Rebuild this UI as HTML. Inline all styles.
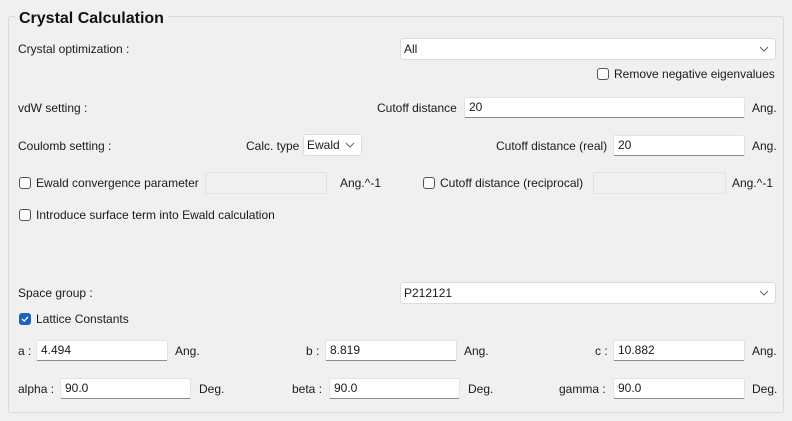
<!DOCTYPE html>
<html><head><meta charset="utf-8"><style>
html,body{margin:0;padding:0;}
body{width:792px;height:421px;background:#f0f0f0;position:relative;overflow:hidden;font-family:"Liberation Sans",sans-serif;font-size:12px;color:#1a1a1a;}
.g{position:absolute;left:8px;top:16px;width:774px;height:395px;border:1px solid #d9d9d9;border-radius:3px;}
.title{position:absolute;left:15px;top:8px;padding:0 4px;background:#f0f0f0;font-size:16px;font-weight:bold;color:#111;line-height:22px;}
.t{position:absolute;height:22px;line-height:22px;white-space:nowrap;}
.i{position:absolute;height:21px;background:#fff;border:1px solid #e3e3e3;border-bottom:1px solid #8a8a8a;box-sizing:border-box;border-radius:2px;line-height:19px;padding-left:4px;}
.d{position:absolute;height:22px;background:#f0f0f0;border:1px solid #e2e2e2;box-sizing:border-box;border-radius:2px;}
.c{position:absolute;height:22px;background:#fff;border:1px solid #dcdcdc;box-sizing:border-box;border-radius:3px;line-height:20px;padding-left:3px;}
.c svg{position:absolute;right:6px;top:7px;}
.cb{position:absolute;width:12px;height:12px;border:1px solid #555;border-radius:3px;background:#fff;box-sizing:border-box;}
.cb.on{background:#1a63c0;border-color:#1a63c0;}
</style></head><body>
<div class="g"></div>
<div class="title">Crystal Calculation</div>

<div class="t" style="left:18px;top:38px">Crystal optimization :</div>
<div class="c" style="left:400px;top:38px;width:376px">All<svg width="10" height="6"><path d="M1 1L5 5L9 1" stroke="#666" fill="none"/></svg></div>
<div class="cb" style="left:597px;top:68px"></div>
<div class="t" style="left:614px;top:63px">Remove negative eigenvalues</div>

<div class="t" style="left:18px;top:97px">vdW setting :</div>
<div class="t" style="left:377px;top:97px">Cutoff distance</div>
<div class="i" style="left:464px;top:97px;width:281px">20</div>
<div class="t" style="left:752px;top:97px">Ang.</div>

<div class="t" style="left:18px;top:135px">Coulomb setting :</div>
<div class="t" style="left:246px;top:135px">Calc. type</div>
<div class="c" style="left:303px;top:134px;width:59px">Ewald<svg width="10" height="6"><path d="M1 1L5 5L9 1" stroke="#666" fill="none"/></svg></div>
<div class="t" style="left:496px;top:135px">Cutoff distance (real)</div>
<div class="i" style="left:613px;top:135px;width:132px">20</div>
<div class="t" style="left:752px;top:135px">Ang.</div>

<div class="cb" style="left:19px;top:177px"></div>
<div class="t" style="left:36px;top:172px">Ewald convergence parameter</div>
<div class="d" style="left:205px;top:172px;width:122px"></div>
<div class="t" style="left:340px;top:172px">Ang.^-1</div>
<div class="cb" style="left:423px;top:177px"></div>
<div class="t" style="left:440px;top:172px">Cutoff distance (reciprocal)</div>
<div class="d" style="left:593px;top:172px;width:133px"></div>
<div class="t" style="left:732px;top:172px">Ang.^-1</div>

<div class="cb" style="left:19px;top:209px"></div>
<div class="t" style="left:36px;top:204px">Introduce surface term into Ewald calculation</div>

<div class="t" style="left:18px;top:282px">Space group :</div>
<div class="c" style="left:400px;top:282px;width:376px">P212121<svg width="10" height="6"><path d="M1 1L5 5L9 1" stroke="#666" fill="none"/></svg></div>

<div class="cb on" style="left:19px;top:313px"><svg width="10" height="10" style="position:absolute;left:0;top:0"><path d="M2 5L4.2 7.2L8 2.8" stroke="#fff" stroke-width="1.3" fill="none"/></svg></div>
<div class="t" style="left:36px;top:308px">Lattice Constants</div>

<div class="t" style="left:18px;top:340px">a :</div>
<div class="i" style="left:36px;top:340px;width:132px">4.494</div>
<div class="t" style="left:175px;top:340px">Ang.</div>
<div class="t" style="left:306px;top:340px">b :</div>
<div class="i" style="left:325px;top:340px;width:132px">8.819</div>
<div class="t" style="left:464px;top:340px">Ang.</div>
<div class="t" style="left:595px;top:340px">c :</div>
<div class="i" style="left:613px;top:340px;width:132px">10.882</div>
<div class="t" style="left:752px;top:340px">Ang.</div>

<div class="t" style="left:18px;top:378px">alpha :</div>
<div class="i" style="left:60px;top:378px;width:131px">90.0</div>
<div class="t" style="left:199px;top:378px">Deg.</div>
<div class="t" style="left:292px;top:378px">beta :</div>
<div class="i" style="left:329px;top:378px;width:131px">90.0</div>
<div class="t" style="left:468px;top:378px">Deg.</div>
<div class="t" style="left:559px;top:378px">gamma :</div>
<div class="i" style="left:613px;top:378px;width:132px">90.0</div>
<div class="t" style="left:752px;top:378px">Deg.</div>
</body></html>
